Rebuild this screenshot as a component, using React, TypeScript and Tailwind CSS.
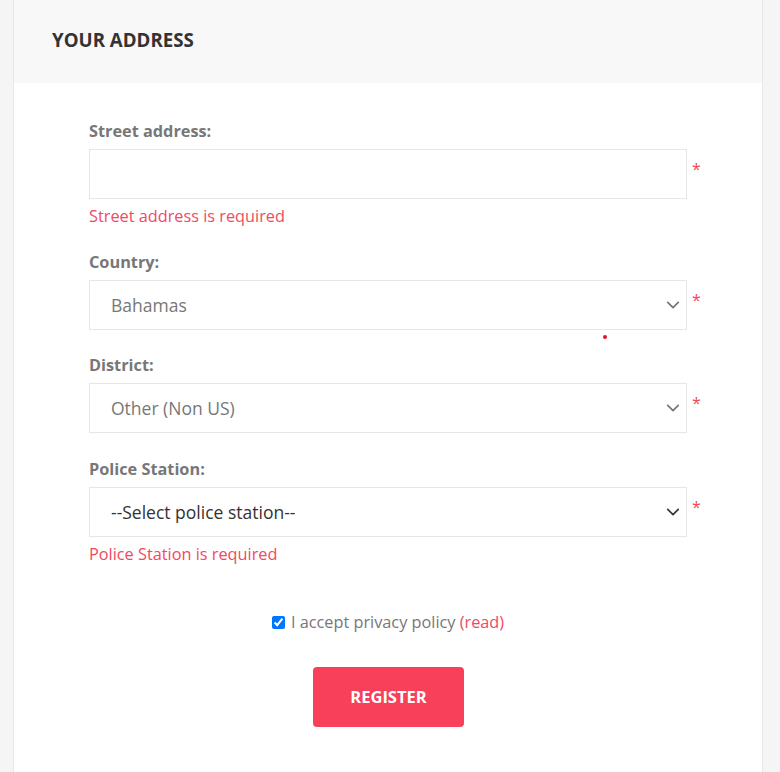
import React from "react";

const Chevron = ({ dark }: { dark?: boolean }) => (
  <svg
    width="14"
    height="14"
    viewBox="0 0 16 16"
    className="pointer-events-none absolute right-[6px] top-1/2 -translate-y-1/2"
  >
    <path
      d="M2 5l6 6 6-6"
      fill="none"
      stroke={dark ? "#343a40" : "#777777"}
      strokeWidth="2"
      strokeLinecap="round"
      strokeLinejoin="round"
    />
  </svg>
);

const Star = () => (
  <span className="ml-[5px] mt-[12px] text-[16px] leading-[16px] text-[#f8435d]">*</span>
);

export default function App() {
  return (
    <div
      className="flex min-h-[772px] w-[780px] bg-[#f5f5f5]"
      style={{ fontFamily: '"Open Sans", "Liberation Sans", sans-serif' }}
    >
      <div className="w-[13px] shrink-0" />
      <div className="relative w-[750px] shrink-0 border-x border-[#e8e8e8] bg-white">
        <div className="flex h-[83px] items-center bg-[#f8f8f8] pb-[3px] pl-[38px]">
          <h2 className="text-[18.7px] font-bold uppercase text-[#333333]">Your Address</h2>
        </div>

        <div className="pl-[75px] pt-[37px]">
          {/* Street */}
          <label className="block text-[16.3px] font-bold leading-[22px] text-[#777777]">
            Street address:
          </label>
          <div className="mt-[7px] flex">
            <input className="h-[50px] w-[598px] border border-[#e6e6e6] bg-white px-[20px] outline-none" />
            <Star />
          </div>
          <p className="mt-[6px] text-[16.3px] leading-[22px] text-[#f04a5f]">
            Street address is required
          </p>

          {/* Country */}
          <label className="mt-[24px] block text-[16.3px] font-bold leading-[22px] text-[#777777]">
            Country:
          </label>
          <div className="mt-[7px] flex">
            <div className="relative flex h-[50px] w-[598px] items-center border border-[#e6e6e6] bg-white pl-[21px] text-[17.5px] text-[#777777]">
              Bahamas
              <Chevron />
            </div>
            <Star />
          </div>

          {/* District */}
          <label className="mt-[24px] block text-[16.3px] font-bold leading-[22px] text-[#777777]">
            District:
          </label>
          <div className="mt-[7px] flex">
            <div className="relative flex h-[50px] w-[598px] items-center border border-[#e6e6e6] bg-white pl-[21px] text-[17.5px] text-[#777777]">
              Other (Non US)
              <Chevron />
            </div>
            <Star />
          </div>

          {/* Police */}
          <label className="mt-[25px] block text-[16.3px] font-bold leading-[22px] text-[#777777]">
            Police Station:
          </label>
          <div className="mt-[7px] flex">
            <div className="relative flex h-[50px] w-[598px] items-center border border-[#e6e6e6] bg-white pl-[21px] text-[17.5px] text-[#333333]">
              --Select police station--
              <Chevron dark />
            </div>
            <Star />
          </div>
          <p className="mt-[6px] text-[16.3px] leading-[22px] text-[#f04a5f]">
            Police Station is required
          </p>
        </div>

        <div className="mt-[46px] flex items-center justify-center">
          <label className="flex items-center text-[16.3px] leading-[22px] text-[#777777]">
            <input
              type="checkbox"
              defaultChecked
              className="mr-[6px] h-[13px] w-[13px] accent-[#0075ff]"
            />
            I accept privacy policy&nbsp;<span className="text-[#f04a5f]">(read)</span>
          </label>
        </div>

        <div className="mt-[34px] flex justify-center pl-[1px]">
          <button className="h-[60px] w-[151px] rounded-[4px] bg-[#f9405a] text-[16.5px] font-bold uppercase text-white">
            Register
          </button>
        </div>

        <span className="absolute left-[589px] top-[335px] h-[4px] w-[4px] rounded-full bg-[#e81123]" />
      </div>
    </div>
  );
}
